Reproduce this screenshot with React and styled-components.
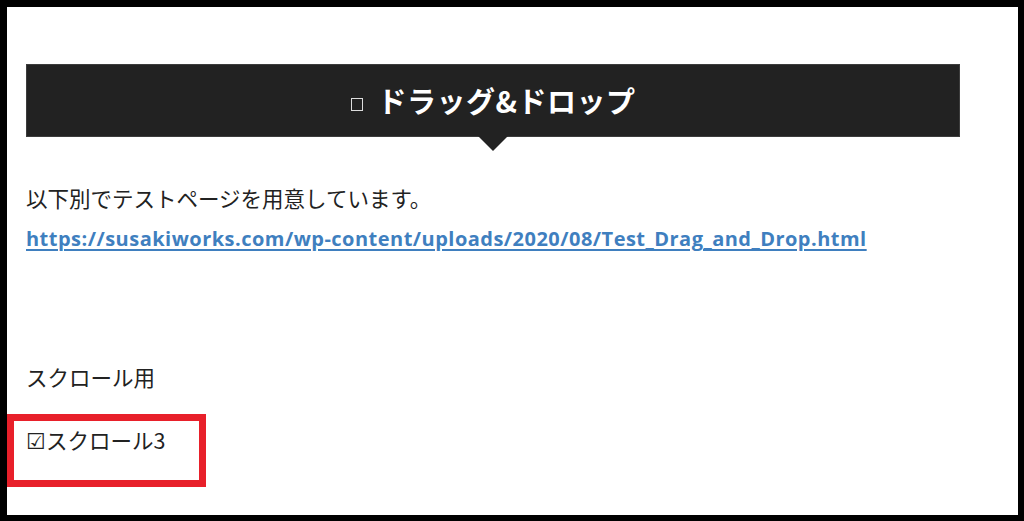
import styled, { createGlobalStyle } from "styled-components";

const GlobalStyle = createGlobalStyle`
    html, body {
        margin: 0;
        padding: 0;
        background: #000;
    }
    * {
        box-sizing: border-box;
    }
`

const App = () => {
    return (<>
        <GlobalStyle />
        <Frame>
            <Banner>
                <TitleMark />
                <BannerTitle>ドラッグ&ドロップ</BannerTitle>
            </Banner>

            <Body>
                <Paragraph>以下別でテストページを用意しています。</Paragraph>
                <Link href="#">https://susakiworks.com/wp-content/uploads/2020/08/Test_Drag_and_Drop.html</Link>
            </Body>

            <Paragraph $top={109}>スクロール用</Paragraph>

            <Highlight>
                <CheckLine>☑スクロール3</CheckLine>
            </Highlight>
        </Frame>
    </>)
}

export default App

const Frame = styled.div`
    width: 1024px;
    height: 521px;
    background: #fff;
    border-style: solid;
    border-color: #000;
    border-width: 7px 6px 6px 7px;
    padding: 57px 58px 0 19px;
    font-family: "Noto Sans CJK JP", "Noto Sans", sans-serif;
    color: #222;
    overflow: hidden;
`
const Banner = styled.div`
    position: relative;
    height: 73px;
    background: #222;
    border: 1px solid #3c3c3c;
    display: flex;
    align-items: center;
    justify-content: center;
    gap: 15px;
    color: #fff;

    &::after {
        content: "";
        position: absolute;
        left: 50%;
        bottom: -15px;
        margin-left: -15px;
        border-left: 15px solid transparent;
        border-right: 15px solid transparent;
        border-top: 15px solid #222;
    }
`
const TitleMark = styled.span`
    display: inline-block;
    width: 12px;
    height: 13px;
    margin-top: 8px;
    border: 1.5px solid #ddd;
`
const BannerTitle = styled.h2`
    margin: 0;
    font-size: 29px;
    font-weight: 700;
    letter-spacing: 0.5px;
    line-height: 1;
`
const Body = styled.div`
    display: flex;
    flex-direction: column;
    align-items: flex-start;
    gap: 12px;
    margin-top: 46px;
`
const Paragraph = styled.p`
    margin: 0;
    margin-top: ${p => (p.$top || 0)}px;
    font-size: 21.5px;
    line-height: 30px;
`
const Link = styled.a`
    font-family: "Open Sans", "Noto Sans", sans-serif;
    font-size: 20px;
    font-weight: 700;
    letter-spacing: 0.48px;
    color: #3f7fbf;
    text-decoration: underline;
    text-decoration-thickness: 2px;
    text-underline-offset: 3px;
    line-height: 28px;
`
const Highlight = styled.div`
    width: 199px;
    height: 73px;
    margin-top: 22px;
    margin-left: -19px;
    border: 7px solid #e8202a;
    padding: 4px 0 0 12px;
`
const CheckLine = styled.span`
    font-size: 21.5px;
    line-height: 30px;
    color: #222;
`
